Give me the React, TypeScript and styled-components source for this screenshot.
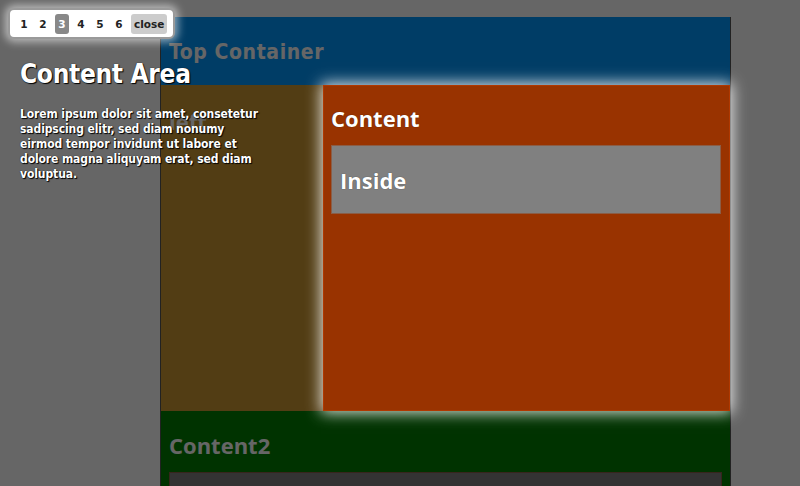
import React from "react";
import styled, { createGlobalStyle } from "styled-components";

const GlobalStyle = createGlobalStyle`
  html, body { margin: 0; padding: 0; background: #ffffff; }
  body { font-family: "DejaVu Sans", "Liberation Sans", sans-serif; }
`;

const Page = styled.div`
  position: relative;
  width: 800px;
  height: 486px;
  overflow: hidden;
  padding: 17px 0 0 160px;
  box-sizing: border-box;
`;

const Container = styled.div`
  width: 571px;
  border-left: 1px solid #555;
  border-right: 1px solid #555;
  box-sizing: border-box;
`;

const SectionTitle = styled.h2<{ $lucida?: boolean }>`
  margin: 0;
  font-family: ${(p) =>
    p.$lucida ? '"DejaVu Sans Condensed", "DejaVu Sans", sans-serif' : '"Open Sans", "DejaVu Sans", sans-serif'};
  font-weight: 700;
  font-size: ${(p) => (p.$lucida ? "21px" : "22px")};
  line-height: 28px;
  color: #ffffff;
  letter-spacing: ${(p) => (p.$lucida ? "0.6px" : "0")};
`;

const TopContainer = styled.div`
  background: #0099ff;
  height: 68px;
  padding: 21px 8px 0;
  box-sizing: border-box;
`;

const Row = styled.div`
  display: flex;
  height: 326px;
`;

const LeftCol = styled.div`
  width: 162px;
  background: #cc9933;
  padding: 22px 8px 0;
  box-sizing: border-box;
`;

const Content = styled.div`
  position: relative;
  z-index: 2;
  flex: 1;
  background: #993300;
  border: 1px solid #b03800;
  padding: 18px 8px 0 7px;
  box-sizing: border-box;
  box-shadow: 0 0 14px 2px rgba(255, 255, 255, 0.85);
  text-shadow: 0 0 1px rgba(0, 0, 0, 0.6);
`;

const InsideBox = styled.div<{ $tall?: boolean }>`
  margin-top: 13px;
  background: #808080;
  border: 1px solid rgba(153, 51, 0, 0.45);
  height: ${(p) => (p.$tall ? "80px" : "69px")};
  padding: 20px 8px 0;
  box-sizing: border-box;
`;

const Content2 = styled.div`
  background: #008000;
  padding: 20px 8px 0;
  height: 100px;
  box-sizing: border-box;
`;

const Overlay = styled.div`
  position: absolute;
  inset: 0;
  background: rgba(0, 0, 0, 0.6);
  z-index: 1;
`;

const Toolbar = styled.div`
  position: absolute;
  top: 8px;
  left: 8px;
  z-index: 3;
  display: flex;
  align-items: center;
  gap: 5px;
  padding: 4px 6px 3px 7px;
  background: #ffffff;
  border: 2px solid #9a9a9a;
  border-radius: 6px;
  box-shadow: 0 0 8px 3px rgba(255, 255, 255, 0.55);
`;

const StepButton = styled.span<{ $active?: boolean; $wide?: boolean }>`
  display: inline-flex;
  align-items: center;
  justify-content: center;
  height: 20px;
  min-width: 14px;
  padding: 0 ${(p) => (p.$wide ? "3px" : "0")};
  border-radius: 3px;
  font-family: "DejaVu Sans", sans-serif;
  font-weight: 700;
  font-size: 10.5px;
  color: ${(p) => (p.$active ? "#ffffff" : "#222222")};
  background: ${(p) => (p.$active ? "#888888" : p.$wide ? "#cccccc" : "transparent")};
`;

const SidePanel = styled.div`
  position: absolute;
  top: 56px;
  left: 20px;
  width: 242px;
  z-index: 3;
  color: #ffffff;
  text-shadow: 1px 1px 1px #000, 0 0 1px #000;
`;

const PanelTitle = styled.h1`
  margin: 0 0 15px;
  font-family: "DejaVu Sans Condensed", "DejaVu Sans", sans-serif;
  font-weight: 700;
  font-size: 26px;
  line-height: 36px;
  letter-spacing: -0.3px;
`;

const PanelText = styled.p`
  margin: 0;
  font-family: "DejaVu Sans Condensed", "DejaVu Sans", sans-serif;
  font-weight: 700;
  font-size: 12px;
  line-height: 15px;
  letter-spacing: -0.1px;
`;

export default function App() {
  return (
    <>
      <GlobalStyle />
      <Page>
        <Container>
          <TopContainer>
            <SectionTitle $lucida>Top Container</SectionTitle>
          </TopContainer>
          <Row>
            <LeftCol>
              <SectionTitle>left</SectionTitle>
            </LeftCol>
            <Content>
              <SectionTitle>Content</SectionTitle>
              <InsideBox>
                <SectionTitle>Inside</SectionTitle>
              </InsideBox>
            </Content>
          </Row>
          <Content2>
            <SectionTitle>Content2</SectionTitle>
            <InsideBox $tall />
          </Content2>
        </Container>
        <Overlay />
        <Toolbar>
          <StepButton>1</StepButton>
          <StepButton>2</StepButton>
          <StepButton $active>3</StepButton>
          <StepButton>4</StepButton>
          <StepButton>5</StepButton>
          <StepButton>6</StepButton>
          <StepButton $wide>close</StepButton>
        </Toolbar>
        <SidePanel>
          <PanelTitle>Content Area</PanelTitle>
          <PanelText>
            Lorem ipsum dolor sit amet, consetetur sadipscing elitr, sed diam nonumy eirmod tempor invidunt ut labore
            et dolore magna aliquyam erat, sed diam voluptua.
          </PanelText>
        </SidePanel>
      </Page>
    </>
  );
}
